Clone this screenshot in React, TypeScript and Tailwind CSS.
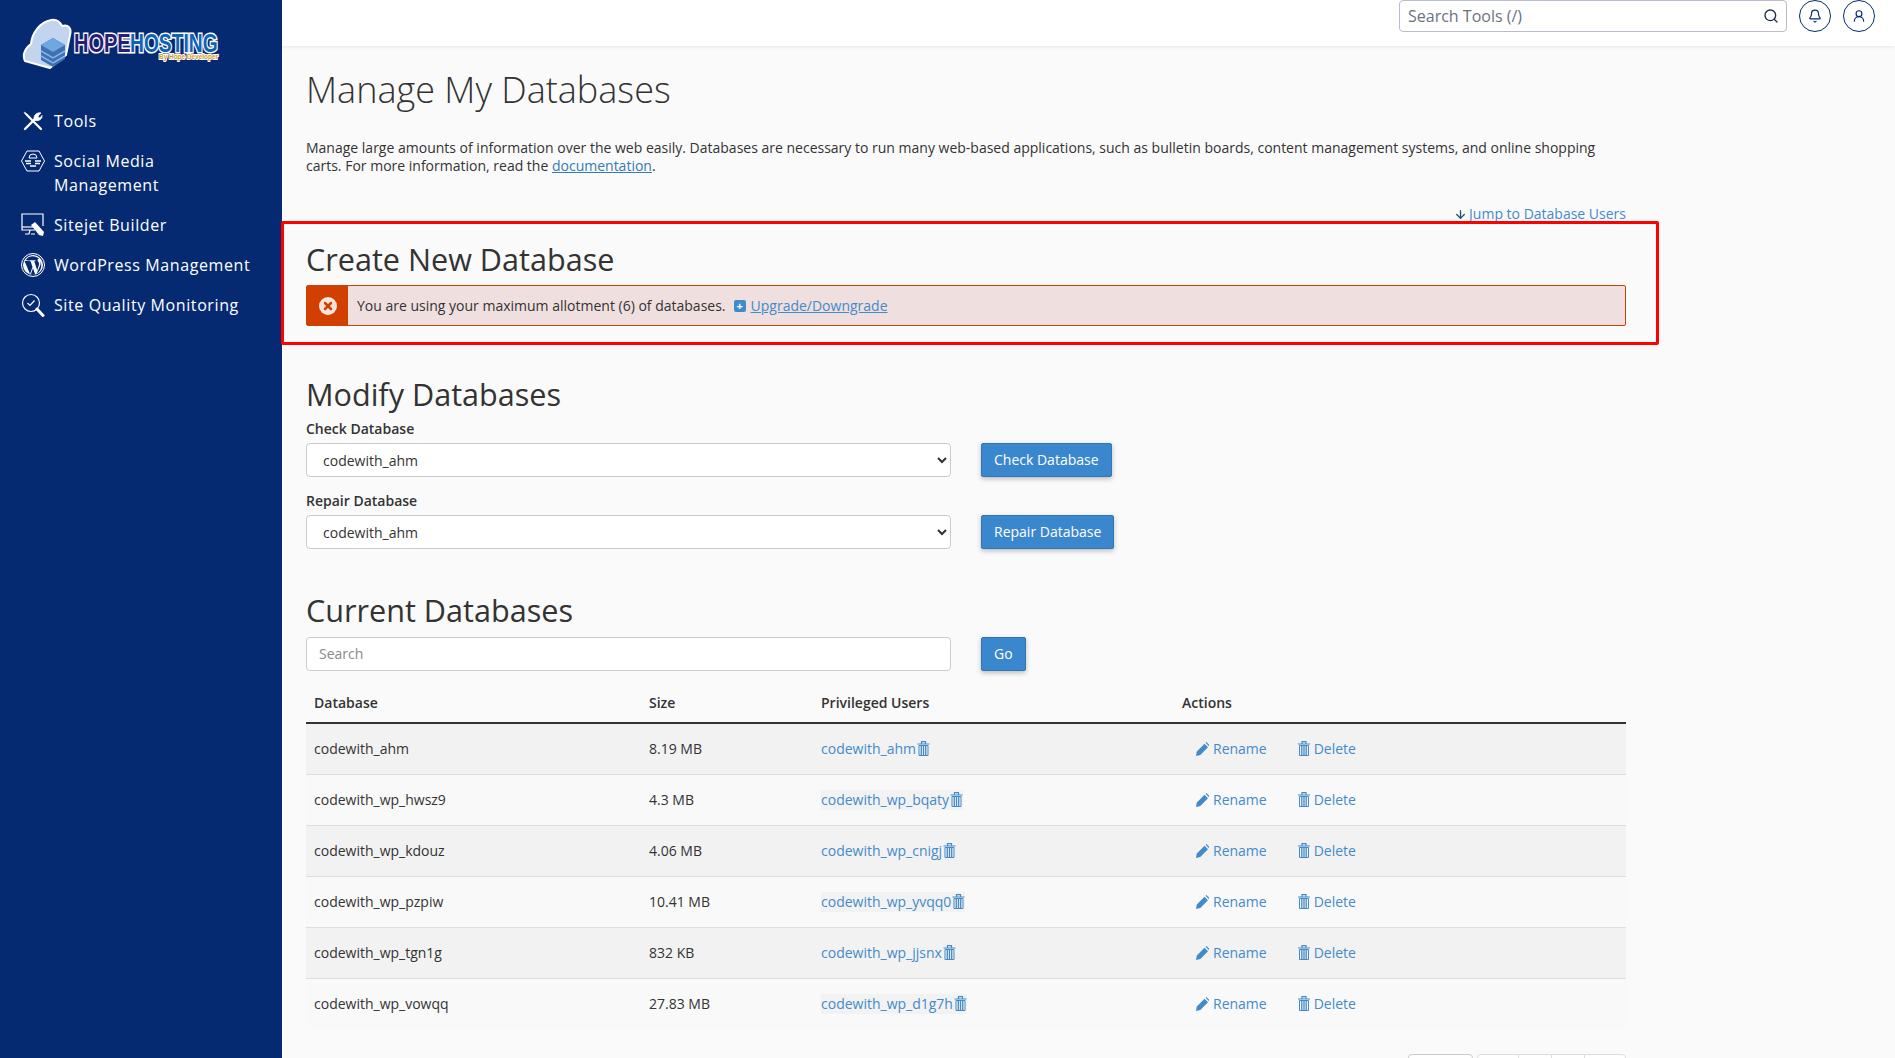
import React from "react";
import { ArrowDown, Bell, Search, UserRound, X } from "lucide-react";

const FONT = "font-['Open_Sans','Noto_Sans',sans-serif]";

const rows = [
  { name: "codewith_ahm", size: "8.19 MB", user: "codewith_ahm" },
  { name: "codewith_wp_hwsz9", size: "4.3 MB", user: "codewith_wp_bqaty" },
  { name: "codewith_wp_kdouz", size: "4.06 MB", user: "codewith_wp_cnigj" },
  { name: "codewith_wp_pzpiw", size: "10.41 MB", user: "codewith_wp_yvqq0" },
  { name: "codewith_wp_tgn1g", size: "832 KB", user: "codewith_wp_jjsnx" },
  { name: "codewith_wp_vowqq", size: "27.83 MB", user: "codewith_wp_d1g7h" },
];

function Logo() {
  return (
    <svg width="204" height="56" viewBox="0 0 204 56" className="block">
      <path
        d="M3 44 C0 38 3 31 9 27 C10 16 18 5 29 3 C34 2 38 5 40 9 C46 7 50 11 48 18 L44 38 L28 51 Z"
        fill="#c3d4ee"
        stroke="#fff"
        strokeWidth="2"
        strokeLinejoin="round"
      />
      <path d="M19 28 L31 21 L43 28 L43 42 L31 50 L19 43 Z" fill="#3f6fb5" />
      <path d="M19 28 L31 35 L43 28 L31 21 Z" fill="#6fa8e0" />
      <path d="M19 34 L31 41 L43 34 M19 39 L31 46 L43 39" stroke="#86b4e6" strokeWidth="1.5" fill="none" />
      <g transform="translate(52 35) scale(0.77 1)">
        <text
          fontFamily="'Liberation Sans', sans-serif"
          fontWeight="700"
          fontSize="26"
          fill="#2b1c78"
          stroke="#fff"
          strokeWidth="3"
          paintOrder="stroke"
        >
          HOPE
        </text>
      </g>
      <g transform="translate(108 35) scale(0.74 1)">
        <text
          fontFamily="'Liberation Sans', sans-serif"
          fontWeight="700"
          fontSize="26"
          fill="#0d63b4"
          stroke="#fff"
          strokeWidth="3"
          paintOrder="stroke"
        >
          HOSTING
        </text>
      </g>
      <g transform="translate(137 41.5) scale(0.86 1)">
        <text
          fontFamily="'Liberation Sans', sans-serif"
          fontWeight="700"
          fontSize="7.5"
          fill="#d39a1c"
          stroke="#fff"
          strokeWidth="2"
          paintOrder="stroke"
        >
          By Hope Developer
        </text>
      </g>
    </svg>
  );
}

function ToolsIcon() {
  return (
    <svg width="20" height="20" viewBox="0 0 20 20" fill="none" stroke="#fff" strokeLinecap="round">
      <path d="M4.5 4.5 L18 18" strokeWidth="2.2" />
      <path d="M2 1.5 L5 4 L4 5 L1.5 2 Z" fill="#fff" strokeWidth="1" />
      <path d="M2 18 L12 8" strokeWidth="2.4" />
      <path d="M11 8 C10.5 4.5 13.5 1 18 2 L15 5 L15.5 6.5 L17 7 L19 4.5 C19.5 8 15.5 10.5 12.5 9.5" fill="#fff" strokeWidth="0.8" />
    </svg>
  );
}

function SocialIcon() {
  return (
    <svg width="24" height="22" viewBox="0 0 24 22" fill="none" stroke="#fff" strokeWidth="1">
      <path d="M6 1 H18 L23.5 11 L18 21 H6 L0.5 11 Z" />
      <path d="M8 8 a4 4 0 0 1 8 0 Z" />
      <path d="M4 11 H10 M14 11 H20 M5 13.5 H10 M14 13.5 H19 M9 16 H15" strokeWidth="1.3" />
    </svg>
  );
}

function SitejetIcon() {
  return (
    <svg width="24" height="24" viewBox="0 0 24 24" fill="none" stroke="#fff" strokeWidth="1.2">
      <path d="M22 13 V1 H1 V17 H14" />
      <path d="M1 14 H12" />
      <path d="M9 17 L8 21 H4 M10 21 H14" />
      <path d="M14 9 L23 19 L22 23 L18 22 L10 12 Z" fill="#fff" stroke="none" />
    </svg>
  );
}

function WordPressIcon() {
  return (
    <svg width="24" height="24" viewBox="0 0 24 24">
      <circle cx="12" cy="12" r="11.5" fill="none" stroke="#fff" strokeWidth="1" />
      <circle cx="12" cy="12" r="10" fill="#fff" />
      <path
        d="M3.5 8 L9 21 L11.5 14 L9.6 8.2 H8.4 V7.3 H14.5 V8.2 H13.2 L16.2 17.3 L17.8 12.4 C18.6 10 17.4 9 16.8 8 C16.2 7 16.8 5.8 18 5.8 C15 2.6 8 2 4.8 6.9 H7.8 V7.6 Z M12 15.3 L9.8 21.6 C11.2 22 12.8 22 14.2 21.4 Z M19.3 7.4 C20 10 19.6 11.8 18.8 13.5 L15.5 20.8 C19.8 18.4 21.6 12.3 19.3 7.4 Z"
        fill="#062a72"
      />
    </svg>
  );
}

function QualityIcon() {
  return (
    <svg width="24" height="25" viewBox="0 0 24 25" fill="none" stroke="#fff" strokeWidth="1.2">
      <circle cx="10" cy="10" r="8.5" />
      <path d="M6.5 10 L9 12.5 L13.5 7.5" />
      <path d="M16 16 L22 22.5" strokeWidth="3" strokeLinecap="round" />
    </svg>
  );
}

function TrashIcon({ className }: { className: string }) {
  return (
    <svg viewBox="0 0 12 15" className={className} fill="none" stroke="currentColor">
      <path d="M0 3 H12 M4 2.5 V0.7 H8 V2.5" strokeWidth="1.2" />
      <path d="M1.5 4.5 H10.5 V14.5 H1.5 Z" strokeWidth="1" />
      <path d="M3.8 5 V14 M6 5 V14 M8.2 5 V14" strokeWidth="1.3" />
    </svg>
  );
}

function PencilIcon() {
  return (
    <svg viewBox="0 0 13 14" className="h-[14px] w-[13px] text-[#428bca]" fill="currentColor">
      <path d="M0 14 L0.8 9.5 L8.5 1.8 L12 5.3 L4.3 13 Z M9.6 0.8 L10.4 0 L13 2.6 L12.9 4.2 Z" />
    </svg>
  );
}

const NAV = [
  { label: "Tools", icon: <ToolsIcon /> },
  { label: "Social Media Management", icon: <SocialIcon /> },
  { label: "Sitejet Builder", icon: <SitejetIcon /> },
  { label: "WordPress Management", icon: <WordPressIcon /> },
  { label: "Site Quality Monitoring", icon: <QualityIcon /> },
];

function DbSelect() {
  return (
    <select className="h-[34px] w-[645px] rounded border border-[#ccc] bg-white pl-3 pr-1 text-sm text-[#333]" defaultValue="codewith_ahm">
      <option>codewith_ahm</option>
    </select>
  );
}

function BlueButton({ children }: { children: React.ReactNode }) {
  return (
    <button className="h-[34px] rounded-[2px] border border-[#2f76b5] bg-[#3a87cd] px-3 text-sm text-white shadow-[0_2px_5px_rgba(0,0,0,0.25)]">
      {children}
    </button>
  );
}

export default function App() {
  return (
    <div className={`flex h-screen overflow-hidden bg-[#fafafa] text-sm text-[#333] ${FONT}`}>
      {/* Sidebar */}
      <aside className="w-[282px] shrink-0 bg-[#062a72] text-white">
        <div className="pl-[22px] pt-[17px]">
          <Logo />
        </div>
        <nav className="mt-[36px] flex flex-col gap-[16px] pl-[21px] pr-[28px]">
          {NAV.map((item) => (
            <div key={item.label} className="flex items-start gap-[9px]">
              <span className="flex h-6 w-6 shrink-0 items-center justify-center">{item.icon}</span>
              <span className="text-base leading-6 tracking-[0.6px]">{item.label}</span>
            </div>
          ))}
        </nav>
      </aside>

      <div className="flex min-w-0 flex-1 flex-col">
        {/* Top bar */}
        <header className="flex h-[46px] shrink-0 items-start justify-end gap-[12px] bg-white pr-[20px] shadow-[0_1px_3px_rgba(0,0,0,0.08)]">
          <div className="flex h-8 w-[388px] items-center justify-between rounded border border-[#b8bcd0] pl-2 pr-[7px]">
            <span className="text-base text-[#6b7280]">Search Tools (/)</span>
            <Search size={16} className="text-[#1a2b4a]" />
          </div>
          <span className="flex h-8 w-8 items-center justify-center rounded-full border border-[#062a72]">
            <Bell size={14} className="text-[#062a72]" />
          </span>
          <span className="flex h-8 w-8 items-center justify-center rounded-full border border-[#062a72]">
            <UserRound size={14} className="text-[#062a72]" />
          </span>
        </header>

        <main className="w-[1344px] pl-6 pt-[19px]">
          <h1 className="text-[36px] font-light leading-[50px] text-[#333]">Manage My Databases</h1>
          <p className="mt-[24px] w-[1300px] text-sm leading-[18px]">
            Manage large amounts of information over the web easily. Databases are necessary to run many web-based
            applications, such as bulletin boards, content management systems, and online shopping carts. For more
            information, read the <a className="text-[#337ab7] underline">documentation</a>.
          </p>
          <div className="mt-[29px] flex items-center justify-end gap-[2px] text-sm leading-5 text-[#428bca]">
            <ArrowDown size={13} strokeWidth={2.5} className="text-[#27566e]" />
            Jump to Database Users
          </div>

          {/* Create */}
          <section className="relative mt-[16px]">
            <h2 className="text-[30.6px] font-normal leading-[38px] text-[#333]">Create New Database</h2>
            <div className="mt-[7px] flex h-[41px] items-center rounded-[2px] border border-[#d14000] bg-[#f0dfdf]">
              <span className="flex h-full w-[41px] shrink-0 items-center justify-center bg-[#d14000]">
                <span className="flex h-[18px] w-[18px] items-center justify-center rounded-full bg-[#f7e5dd]">
                  <X size={12} strokeWidth={5} className="text-[#d14000]" />
                </span>
              </span>
              <span className="ml-[9px]">You are using your maximum allotment (6) of databases.</span>
              <span className="ml-2 flex h-3 w-3 items-center justify-center rounded-[2px] bg-[#428bca] text-[11px] font-bold leading-none text-white">+</span>
              <a className="ml-[5px] text-[#428bca] underline">Upgrade/Downgrade</a>
            </div>
            <div className="pointer-events-none absolute -left-[25px] -right-[33px] -top-[19px] -bottom-[19px] rounded-[2px] border-[3px] border-[#ff0000]" />
          </section>

          {/* Modify */}
          <section className="mt-[49px]">
            <h2 className="text-[30.6px] font-normal leading-[38px]">Modify Databases</h2>
            <label className="mt-[6px] block font-semibold leading-[20px]">Check Database</label>
            <div className="mt-[4px] flex items-center gap-[30px]">
              <DbSelect />
              <BlueButton>Check Database</BlueButton>
            </div>
            <label className="mt-[14px] block font-semibold leading-[20px]">Repair Database</label>
            <div className="mt-[4px] flex items-center gap-[30px]">
              <DbSelect />
              <BlueButton>Repair Database</BlueButton>
            </div>
          </section>

          {/* Current */}
          <section className="mt-[42px]">
            <h2 className="text-[30.6px] font-normal leading-[38px]">Current Databases</h2>
            <div className="mt-[8px] flex items-center gap-[30px]">
              <div className="flex h-[34px] w-[645px] items-center rounded border border-[#ccc] bg-white px-3 text-[#8a8a8a]">Search</div>
              <BlueButton>Go</BlueButton>
            </div>

            <table className="mt-[13px] w-full table-fixed border-collapse">
              <thead>
                <tr className="h-[39px] border-b-2 border-[#333] text-left font-semibold">
                  <th className="w-[335px] pl-2 font-semibold">Database</th>
                  <th className="w-[172px] pl-2 font-semibold">Size</th>
                  <th className="w-[361px] pl-2 font-semibold">Privileged Users</th>
                  <th className="pl-2 font-semibold">Actions</th>
                </tr>
              </thead>
              <tbody>
                {rows.map((row, i) => (
                  <tr
                    key={row.name}
                    className={`h-[51px] ${i < rows.length - 1 ? "border-b border-[#ddd]" : ""} ${i % 2 === 0 ? "bg-[#f2f2f2]" : "bg-[#f9f9f9]"}`}
                  >
                    <td className="pl-2">{row.name}</td>
                    <td className="pl-2">{row.size}</td>
                    <td className="pl-2 text-[#428bca]">
                      <span className={`inline-flex items-center ${i === 0 ? "" : "bg-[#f2f2f2]"}`}>
                        {row.user}
                        <TrashIcon className="ml-[1px] h-[15px] w-[13px] text-[#428bca]" />
                      </span>
                    </td>
                    <td className="pl-[22px] text-[#428bca]">
                      <span className="flex items-center">
                        <PencilIcon />
                        <span className="ml-[4px]">Rename</span>
                        <TrashIcon className="ml-[31px] h-[15px] w-[12px] text-[#428bca]" />
                        <span className="ml-[4px]">Delete</span>
                      </span>
                    </td>
                  </tr>
                ))}
              </tbody>
            </table>

            {/* Pagination, cut off by the window */}
            <div className="mt-[25px] flex justify-end gap-[4px]">
              <span className="h-8 w-[65px] rounded-t border border-[#ccc] bg-white" />
              <span className="flex h-8 w-[149px] rounded-t border border-[#ddd] bg-white">
                <span className="w-[41px] border-r border-[#ddd]" />
                <span className="w-[33px] border-r border-[#ddd]" />
                <span className="w-[33px] border-r border-[#ddd]" />
              </span>
            </div>
          </section>
        </main>
      </div>
    </div>
  );
}
